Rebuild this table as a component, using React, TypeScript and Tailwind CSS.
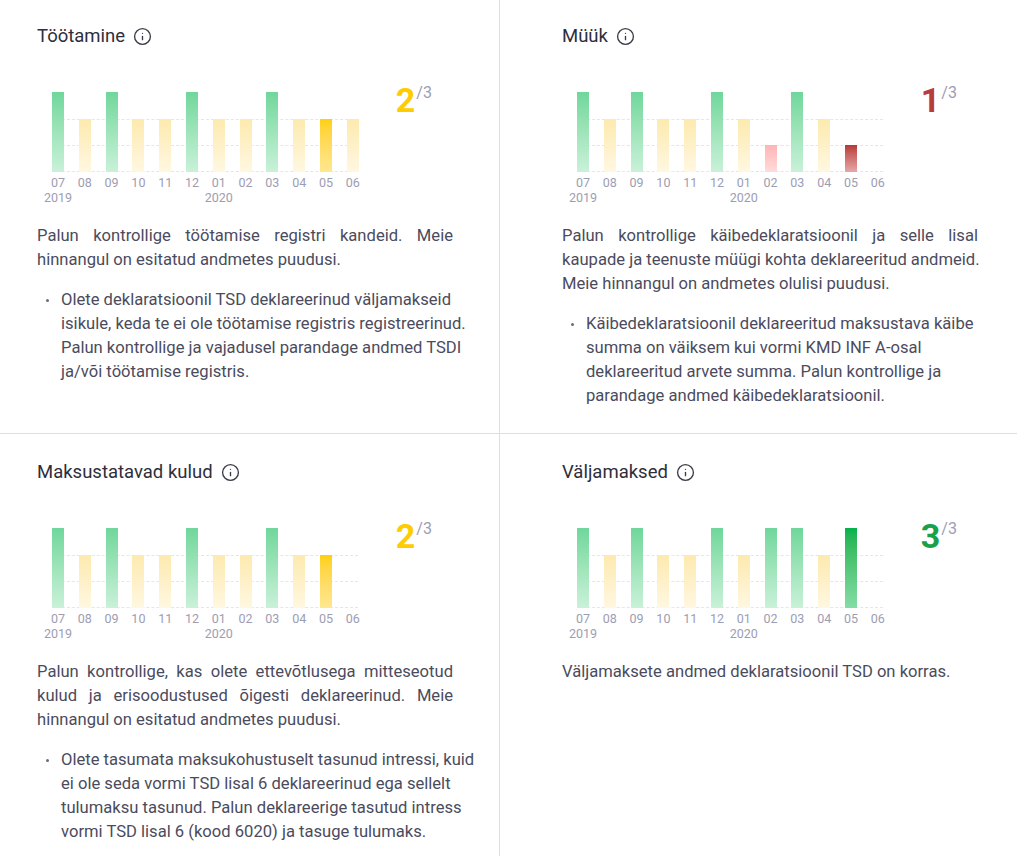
import { Info } from 'lucide-react';

type BarKind = 'g' | 'G' | 'y' | 'Y' | 'r' | 'R' | null;

interface PanelData {
  title: string;
  bars: BarKind[];
  score: number;
  scoreClass: string;
  paragraph: string[];
  bullet?: string[];
}

const MONTHS = ['07', '08', '09', '10', '11', '12', '01', '02', '03', '04', '05', '06'];
const YEARS: Record<number, string> = { 0: '2019', 6: '2020' };

// bar colour + height per kind
const BAR_CLASS: Record<string, string> = {
  g: 'h-[80px] bg-linear-to-b from-[#6fd79b] to-[#c9f1d9]',
  G: 'h-[80px] bg-linear-to-b from-[#00b24b] to-[#84dca6]',
  y: 'h-[53px] bg-linear-to-b from-[#fdeaae] to-[#fff7e1]',
  Y: 'h-[53px] bg-linear-to-b from-[#ffd000] to-[#ffe78e]',
  r: 'h-[27px] bg-linear-to-b from-[#ffb4b4] to-[#ffdcdc]',
  R: 'h-[27px] bg-linear-to-b from-[#b73939] to-[#e4a8a8]',
};

const panels: PanelData[] = [
  {
    title: 'Töötamine',
    bars: ['g', 'y', 'g', 'y', 'y', 'g', 'y', 'y', 'g', 'y', 'Y', 'y'],
    score: 2,
    scoreClass: 'text-[#ffcc00]',
    paragraph: [
      'Palun kontrollige töötamise registri kandeid. Meie',
      'hinnangul on esitatud andmetes puudusi.',
    ],
    bullet: [
      'Olete deklaratsioonil TSD deklareerinud väljamakseid',
      'isikule, keda te ei ole töötamise registris registreerinud.',
      'Palun kontrollige ja vajadusel parandage andmed TSDI',
      'ja/või töötamise registris.',
    ],
  },
  {
    title: 'Müük',
    bars: ['g', 'y', 'g', 'y', 'y', 'g', 'y', 'r', 'g', 'y', 'R', null],
    score: 1,
    scoreClass: 'text-[#b93c3c]',
    paragraph: [
      'Palun kontrollige käibedeklaratsioonil ja selle lisal',
      'kaupade ja teenuste müügi kohta deklareeritud andmeid.',
      'Meie hinnangul on andmetes olulisi puudusi.',
    ],
    bullet: [
      'Käibedeklaratsioonil deklareeritud maksustava käibe',
      'summa on väiksem kui vormi KMD INF A-osal',
      'deklareeritud arvete summa. Palun kontrollige ja',
      'parandage andmed käibedeklaratsioonil.',
    ],
  },
  {
    title: 'Maksustatavad kulud',
    bars: ['g', 'y', 'g', 'y', 'y', 'g', 'y', 'y', 'g', 'y', 'Y', null],
    score: 2,
    scoreClass: 'text-[#ffcc00]',
    paragraph: [
      'Palun kontrollige, kas olete ettevõtlusega mitteseotud',
      'kulud ja erisoodustused õigesti deklareerinud. Meie',
      'hinnangul on esitatud andmetes puudusi.',
    ],
    bullet: [
      'Olete tasumata maksukohustuselt tasunud intressi, kuid',
      'ei ole seda vormi TSD lisal 6 deklareerinud ega sellelt',
      'tulumaksu tasunud. Palun deklareerige tasutud intress',
      'vormi TSD lisal 6 (kood 6020) ja tasuge tulumaks.',
    ],
  },
  {
    title: 'Väljamaksed',
    bars: ['g', 'y', 'g', 'y', 'y', 'g', 'y', 'g', 'g', 'y', 'G', null],
    score: 3,
    scoreClass: 'text-[#18a04a]',
    paragraph: ['Väljamaksete andmed deklaratsioonil TSD on korras.'],
  },
];

function Chart({ bars }: { bars: BarKind[] }) {
  return (
    <div className="ml-[15px] mt-[8px]">
      <div className="relative h-[80px] w-[306px]">
        {/* dashed grid lines */}
        <div className="absolute left-0 right-0 top-[26.7px] border-t border-dashed border-[#e6e6ea]" />
        <div className="absolute left-0 right-0 top-[53.3px] border-t border-dashed border-[#e6e6ea]" />
        <div className="absolute left-0 right-0 bottom-0 border-t border-dashed border-[#e6e6ea]" />
        <div className="relative flex h-full items-end gap-[14.8px]">
          {bars.map((b, i) => (
            <div key={i} className={`w-[12px] shrink-0 ${b ? BAR_CLASS[b] : 'h-0'}`} />
          ))}
        </div>
      </div>
      <div className="mt-[3px] flex gap-[14.8px] text-[12.5px] leading-[15px] text-[#9d9db2]">
        {MONTHS.map((m, i) => (
          <div key={m} className="flex w-[12px] shrink-0 flex-col items-center whitespace-nowrap">
            <span>{m}</span>
            {YEARS[i] && <span>{YEARS[i]}</span>}
          </div>
        ))}
      </div>
    </div>
  );
}

function Panel({ data, bottom, left }: { data: PanelData; bottom?: boolean; left?: boolean }) {
  return (
    <div
      className={`${left ? 'border-r border-[#dedee3] pl-[37px]' : 'pl-[62px]'} ${
        bottom ? 'h-[422px] pt-[26px]' : 'h-[434px] border-b border-[#dedee3] pt-[24px]'
      } overflow-hidden`}
    >
      <h3 className="flex items-center gap-[8px] text-[18.5px] leading-[24px] text-[#2e2e3c]">
        {data.title}
        <Info size={19} strokeWidth={1.7} className="text-[#3a3a48]" />
      </h3>

      <div className="mt-[36px] flex items-start">
        <Chart bars={data.bars} />
        <div className="ml-[37px] flex items-start">
          <span className={`-mt-[1px] text-[34px] font-bold leading-none ${data.scoreClass}`}>{data.score}</span>
          <span className="ml-[1px] mt-[1px] text-[16px] leading-none text-[#9d9db2]">/3</span>
        </div>
      </div>

      <div className="mt-[19px] w-[416px] text-[16.6px] leading-[24px] text-[#4b4b5d]">
        {data.paragraph.map((line, i) => (
          <div
            key={i}
            className={`whitespace-nowrap ${
              i < data.paragraph.length - 1 ? 'text-justify [text-align-last:justify]' : ''
            }`}
          >
            {line}
          </div>
        ))}
      </div>

      {data.bullet && (
        <div className="mt-[16px] flex text-[16.6px] leading-[24px] text-[#4b4b5d]">
          <div className="flex h-[24px] w-[24px] shrink-0 items-center pl-[9px]">
            <div className="h-[3px] w-[3px] rounded-full bg-[#6b6b7b]" />
          </div>
          <div className="whitespace-nowrap">
            {data.bullet.map((line, i) => (
              <div key={i}>{line}</div>
            ))}
          </div>
        </div>
      )}
    </div>
  );
}

export default function App() {
  return (
    <div className="grid h-[856px] w-[1017px] grid-cols-[500px_1fr] bg-white font-['Roboto',sans-serif]">
      <Panel data={panels[0]} left />
      <Panel data={panels[1]} />
      <Panel data={panels[2]} left bottom />
      <Panel data={panels[3]} bottom />
    </div>
  );
}
